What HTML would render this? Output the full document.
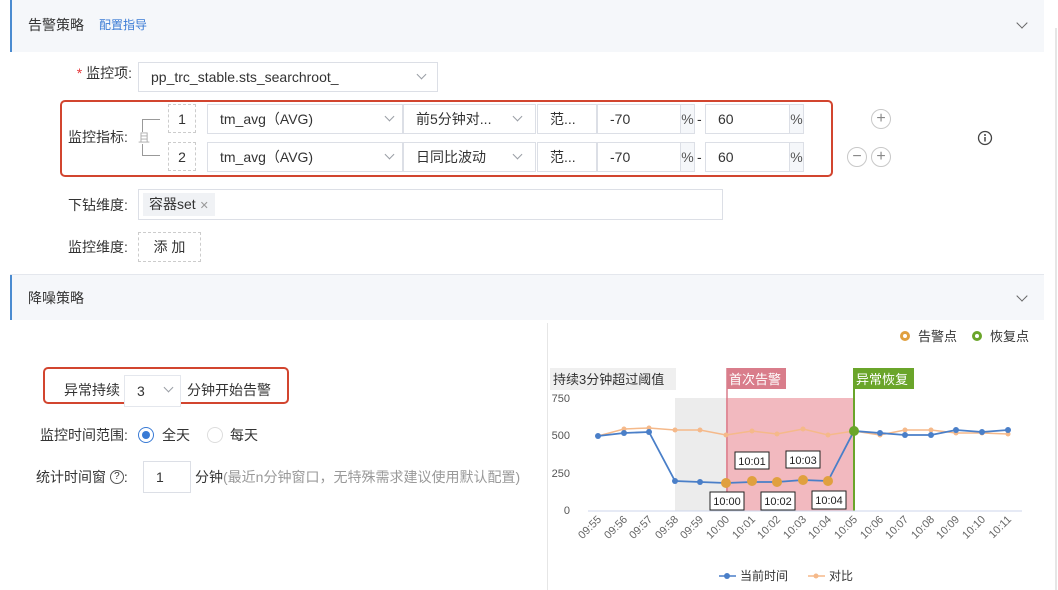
<!DOCTYPE html>
<html><head><meta charset="utf-8"><style>
*{box-sizing:border-box;margin:0;padding:0}
body{width:1058px;height:590px;background:#fff;font-family:"Liberation Sans","Noto Sans CJK SC",sans-serif;font-size:14px;color:#333;position:relative;overflow:hidden}
.a{position:absolute;line-height:1}
.hdr{background:#f5f7fa;border-left:2px solid #4a8bd0}
.box{position:absolute;border:1px solid #dcdfe6;background:#fff;display:flex;align-items:center;padding-left:12px;font-size:14px}
.chev{position:absolute;width:7px;height:7px;border-right:1px solid #9a9ea5;border-bottom:1px solid #9a9ea5;transform:rotate(45deg)}
.lbl{position:absolute;text-align:right;font-size:14px;color:#333;line-height:1}
.circ{position:absolute;width:20px;height:20px;border:1px solid #c8c8c8;border-radius:50%;color:#888;font-size:16px;line-height:17px;text-align:center}
.pct{position:absolute;background:#f5f7fa;border:1px solid #dcdfe6;width:15px;text-align:center;line-height:28px;color:#555}
</style></head><body>
<div class="a hdr" style="left:10px;top:0;width:1034px;height:52px"></div>
<div class="a" style="left:28px;top:18px">告警策略</div>
<div class="a" style="left:99px;top:19px;font-size:12px;color:#3a7bd5">配置指导</div>
<div class="chev" style="left:1018px;top:19px;width:8px;height:8px;border-color:#666"></div>
<div class="a" style="left:1055px;top:28px;width:2px;height:562px;background:#e6e6e6"></div>

<div class="lbl" style="left:60px;top:66px;width:72px"><span style="color:#e4393c">*</span> 监控项:</div>
<div class="box" style="left:138px;top:62px;width:300px;height:30px">pp_trc_stable.sts_searchroot_</div>
<div class="chev" style="left:418px;top:71px"></div>

<div class="a" style="left:60px;top:100px;width:773px;height:77px;border:2.5px solid #d2452f;border-radius:5px"></div>
<div class="lbl" style="left:68px;top:130px">监控指标:</div>
<div class="a" style="left:142px;top:119px;width:18px;height:37px;border:1px solid #999;border-right:none"></div>
<div class="a" style="left:138px;top:132px;background:#fff;color:#aaa;font-size:12px">且</div>
<div class="a" style="left:168px;top:104px;width:28px;height:29px;border:1px dashed #ccc;text-align:center;line-height:28px">1</div>
<div class="a" style="left:168px;top:142px;width:28px;height:29px;border:1px dashed #ccc;text-align:center;line-height:28px">2</div>

<div class="box" style="left:207px;top:104px;width:196px;height:30px">tm_avg（AVG)</div><div class="chev" style="left:386px;top:113px"></div>
<div class="box" style="left:403px;top:104px;width:133px;height:30px">前5分钟对...</div><div class="chev" style="left:514px;top:113px"></div>
<div class="box" style="left:537px;top:104px;width:60px;height:30px">范...</div>
<div class="box" style="left:597px;top:104px;width:84px;height:30px">-70</div>
<div class="pct" style="left:680px;top:104px;height:30px">%</div>
<div class="a" style="left:697px;top:112px">-</div>
<div class="box" style="left:705px;top:104px;width:85px;height:30px">60</div>
<div class="pct" style="left:789px;top:104px;height:30px">%</div>

<div class="box" style="left:207px;top:142px;width:196px;height:30px">tm_avg（AVG)</div><div class="chev" style="left:386px;top:151px"></div>
<div class="box" style="left:403px;top:142px;width:133px;height:30px">日同比波动</div><div class="chev" style="left:514px;top:151px"></div>
<div class="box" style="left:537px;top:142px;width:60px;height:30px">范...</div>
<div class="box" style="left:597px;top:142px;width:84px;height:30px">-70</div>
<div class="pct" style="left:680px;top:142px;height:30px">%</div>
<div class="a" style="left:697px;top:150px">-</div>
<div class="box" style="left:705px;top:142px;width:85px;height:30px">60</div>
<div class="pct" style="left:789px;top:142px;height:30px">%</div>

<div class="circ" style="left:871px;top:109px">+</div>
<div class="circ" style="left:847px;top:147px">−</div>
<div class="circ" style="left:871px;top:147px">+</div>
<svg class="a" style="left:977px;top:130px" width="16" height="16"><circle cx="8" cy="8" r="6.5" fill="none" stroke="#444" stroke-width="1.3"/><circle cx="8" cy="5" r="1" fill="#444"/><line x1="8" y1="7" x2="8" y2="11.5" stroke="#444" stroke-width="1.5"/></svg>

<div class="lbl" style="left:68px;top:198px">下钻维度:</div>
<div class="box" style="left:138px;top:189px;width:585px;height:31px;padding-left:4px"><span style="background:#f0f2f5;padding:4px 6px;font-size:14px;line-height:1">容器set <span style="color:#999;font-size:11px">✕</span></span></div>
<div class="lbl" style="left:68px;top:240px">监控维度:</div>
<div class="a" style="left:138px;top:232px;width:63px;height:30px;border:1px dashed #ccc;text-align:center;line-height:28px">添 加</div>

<div class="a" style="left:10px;top:274px;width:1034px;height:1px;background:#e4e7ed"></div>
<div class="a hdr" style="left:10px;top:275px;width:1034px;height:45px"></div>
<div class="a" style="left:28px;top:291px">降噪策略</div>
<div class="chev" style="left:1018px;top:292px;width:8px;height:8px;border-color:#666"></div>

<div class="a" style="left:43px;top:367px;width:246px;height:37px;border:2.5px solid #d2452f;border-radius:5px"></div>
<div class="a" style="left:64px;top:383px">异常持续</div>
<div class="box" style="left:124px;top:375px;width:57px;height:32px;border-color:#e4e7ed">3</div><div class="chev" style="left:165px;top:384px"></div>
<div class="a" style="left:187px;top:383px">分钟开始告警</div>

<div class="lbl" style="left:40px;top:428px">监控时间范围:</div>
<div class="a" style="left:138px;top:427px;width:16px;height:16px;border:1px solid #3a7bd5;border-radius:50%"><div style="margin:3px;width:8px;height:8px;border-radius:50%;background:#3a7bd5"></div></div>
<div class="a" style="left:162px;top:428px">全天</div>
<div class="a" style="left:207px;top:427px;width:16px;height:16px;border:1px solid #ddd;border-radius:50%"></div>
<div class="a" style="left:230px;top:428px">每天</div>
<div class="lbl" style="left:36px;top:470px">统计时间窗 <span style="display:inline-block;width:14px;height:14px;border:1px solid #555;border-radius:50%;font-size:10px;line-height:12px;text-align:center;vertical-align:top">?</span>:</div>
<div class="box" style="left:143px;top:461px;width:48px;height:32px">1</div>
<div class="a" style="left:195px;top:470px">分钟<span style="color:#999">(最近n分钟窗口，无特殊需求建议使用默认配置)</span></div>

<div class="a" style="left:547px;top:323px;width:1px;height:267px;background:#e6e6e6"></div>

<svg class="a" style="left:0;top:0" width="1058" height="590" font-family="Liberation Sans,Noto Sans CJK SC,sans-serif">
<circle cx="905" cy="336" r="5" fill="#e0a03f"/><circle cx="905" cy="336" r="2" fill="#fff"/>
<text x="918" y="341" font-size="13" fill="#333">告警点</text>
<circle cx="977" cy="336" r="5" fill="#6aa52a"/><circle cx="977" cy="336" r="2" fill="#fff"/>
<text x="990" y="341" font-size="13" fill="#333">恢复点</text>
<rect x="675" y="398" width="51" height="113" fill="#ececec"/>
<rect x="726" y="398" width="128" height="113" fill="#f2b9bf"/>
<line x1="727" y1="368" x2="727" y2="511" stroke="#d97d8b" stroke-width="1.5"/>
<line x1="854" y1="368" x2="854" y2="511" stroke="#6aa52a" stroke-width="2"/>
<rect x="550" y="368" width="126" height="22" fill="#efefef"/>
<text x="553" y="384" font-size="13" fill="#333">持续3分钟超过阈值</text>
<rect x="727" y="368" width="59" height="21" fill="#d97d8b"/>
<text x="729" y="384" font-size="13" fill="#fff">首次告警</text>
<rect x="854" y="368" width="60" height="21" fill="#6aa52a"/>
<text x="856" y="384" font-size="13" fill="#fff">异常恢复</text>
<g font-size="11" fill="#555" text-anchor="end">
<text x="570" y="402">750</text><text x="570" y="439">500</text><text x="570" y="477">250</text><text x="570" y="514">0</text></g>
<line x1="588" y1="511" x2="1022" y2="511" stroke="#ccd6eb"/>
<g font-size="11" fill="#666" text-anchor="end">
<text transform="translate(602,520) rotate(-45)">09:55</text><text transform="translate(628,520) rotate(-45)">09:56</text><text transform="translate(653,520) rotate(-45)">09:57</text><text transform="translate(679,520) rotate(-45)">09:58</text><text transform="translate(704,520) rotate(-45)">09:59</text><text transform="translate(730,520) rotate(-45)">10:00</text><text transform="translate(756,520) rotate(-45)">10:01</text><text transform="translate(781,520) rotate(-45)">10:02</text><text transform="translate(807,520) rotate(-45)">10:03</text><text transform="translate(832,520) rotate(-45)">10:04</text><text transform="translate(858,520) rotate(-45)">10:05</text><text transform="translate(884,520) rotate(-45)">10:06</text><text transform="translate(909,520) rotate(-45)">10:07</text><text transform="translate(935,520) rotate(-45)">10:08</text><text transform="translate(960,520) rotate(-45)">10:09</text><text transform="translate(986,520) rotate(-45)">10:10</text><text transform="translate(1012,520) rotate(-45)">10:11</text></g>
<polyline fill="none" stroke="#f5b98a" stroke-width="1.5" points="598,436 624,429 649,428 675,430 700,430 726,435 752,431 777,434 803,429 828,435 854,431 880,435 905,430 931,430 956,433 982,433 1008,434"/>
<g fill="#f5b98a"><circle cx="624" cy="429" r="2.5"/><circle cx="649" cy="428" r="2.5"/><circle cx="675" cy="430" r="2.5"/><circle cx="700" cy="430" r="2.5"/><circle cx="726" cy="435" r="2.5"/><circle cx="752" cy="431" r="2.5"/><circle cx="777" cy="434" r="2.5"/><circle cx="803" cy="429" r="2.5"/><circle cx="828" cy="435" r="2.5"/><circle cx="880" cy="435" r="2.5"/><circle cx="905" cy="430" r="2.5"/><circle cx="931" cy="430" r="2.5"/><circle cx="956" cy="433" r="2.5"/><circle cx="982" cy="433" r="2.5"/><circle cx="1008" cy="434" r="2.5"/></g>
<polyline fill="none" stroke="#4a7fc8" stroke-width="1.8" points="598,436 624,433 649,432 675,481 700,482 726,483 752,482 777,482 803,480 828,481 854,431 880,433 905,435 931,435 956,430 982,432 1008,430"/>
<g fill="#4a7fc8"><circle cx="598" cy="436" r="3"/><circle cx="624" cy="433" r="3"/><circle cx="649" cy="432" r="3"/><circle cx="675" cy="481" r="3"/><circle cx="700" cy="482" r="3"/><circle cx="880" cy="433" r="3"/><circle cx="905" cy="435" r="3"/><circle cx="931" cy="435" r="3"/><circle cx="956" cy="430" r="3"/><circle cx="982" cy="432" r="3"/><circle cx="1008" cy="430" r="3"/></g>
<g fill="#e0a03f"><circle cx="726" cy="483" r="5"/><circle cx="752" cy="481" r="5"/><circle cx="777" cy="482" r="5"/><circle cx="803" cy="480" r="5"/><circle cx="828" cy="481" r="5"/></g>
<circle cx="854" cy="431" r="5" fill="#6aa52a"/>
<g font-size="11" fill="#222" text-anchor="middle" stroke-width="1">
<rect x="710" y="492" width="34" height="18" fill="#fff" stroke="#222"/><text x="727" y="505">10:00</text>
<rect x="735" y="452" width="34" height="17" fill="#fff" stroke="#222"/><text x="752" y="465">10:01</text>
<rect x="761" y="492" width="34" height="18" fill="#fff" stroke="#222"/><text x="778" y="505">10:02</text>
<rect x="786" y="451" width="34" height="17" fill="#fff" stroke="#222"/><text x="803" y="464">10:03</text>
<rect x="812" y="491" width="34" height="18" fill="#fff" stroke="#222"/><text x="829" y="504">10:04</text></g>
<line x1="719" y1="576" x2="736" y2="576" stroke="#4a7fc8" stroke-width="1.5"/><circle cx="727" cy="576" r="3" fill="#4a7fc8"/>
<text x="740" y="580" font-size="12" fill="#333">当前时间</text>
<line x1="808" y1="576" x2="825" y2="576" stroke="#f5b98a" stroke-width="1.5"/><circle cx="816" cy="576" r="2.5" fill="#f5b98a"/>
<text x="829" y="580" font-size="12" fill="#333">对比</text>
</svg>
</body></html>
